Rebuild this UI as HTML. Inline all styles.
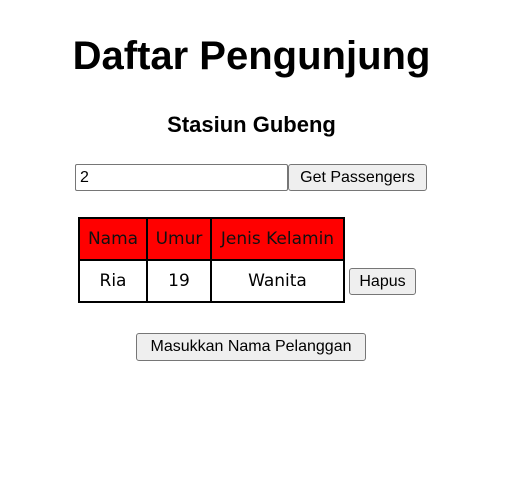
<!DOCTYPE html>
<html><head><style>
body{margin:0;width:507px;height:500px;background:#fff;font-family:"Liberation Sans",sans-serif;position:relative;overflow:hidden}
.a{position:absolute;box-sizing:border-box}
h1{position:absolute;left:0;width:503px;top:30px;margin:0;text-align:center;font-size:40px;font-weight:bold;line-height:52px}
h3{position:absolute;left:0;width:503px;top:112px;margin:0;text-align:center;font-size:22px;font-weight:bold;line-height:26px}
.btn{background:#efefef;border:1px solid #767676;border-radius:3px;font-size:16px;text-align:center;color:#000}
table{position:absolute;left:78px;top:217px;width:265px;table-layout:fixed;border-collapse:collapse;font-family:"DejaVu Sans",sans-serif;font-size:17px}
td,th{border:2px solid #000;font-weight:normal;text-align:center;padding:0;height:40px;white-space:nowrap;overflow:hidden}
th{background:#f00;color:#111}
</style></head><body>
<h1>Daftar Pengunjung</h1>
<h3>Stasiun Gubeng</h3>
<div class="a" style="left:75px;top:164px;width:213px;height:27px;border:1px solid #767676;border-radius:2px;font-size:16px;line-height:25px;padding-left:4px">2</div>
<div class="a btn" style="left:288px;top:164px;width:139px;height:27px;line-height:25px">Get Passengers</div>
<table>
<colgroup><col style="width:68px"><col style="width:64px"><col style="width:133px"></colgroup>
<tr><th>Nama</th><th>Umur</th><th>Jenis Kelamin</th></tr>
<tr><td>Ria</td><td>19</td><td>Wanita</td></tr>
</table>
<div class="a btn" style="left:349px;top:268px;width:67px;height:27px;line-height:25px">Hapus</div>
<div class="a btn" style="left:136px;top:333px;width:230px;height:28px;line-height:26px">Masukkan Nama Pelanggan</div>
</body></html>
